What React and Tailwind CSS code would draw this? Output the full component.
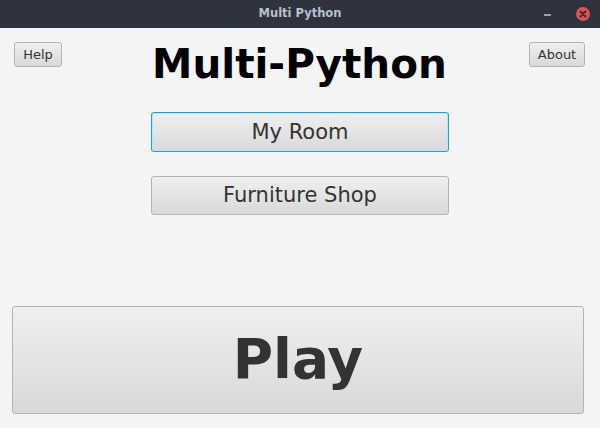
import React from "react";

const btn =
  "border border-[#b3b3b3] rounded-[3px] bg-gradient-to-b from-[#efefef] to-[#d9d9d9] text-[#333333] flex items-center justify-center";

const TitleBar = () => (
  <div className="relative h-[28px] bg-[#2f333d] flex items-center justify-center">
    <span className="text-[11.5px] font-bold text-[#b9c1cc]">
      Multi Python
    </span>
    <div className="absolute right-[10px] top-0 h-[28px] flex items-center gap-[25px]">
      <div className="w-[7px] h-[2px] bg-[#9aa2ad] mt-[1px]" />
      <div className="w-[14px] h-[14px] rounded-full bg-[#e05252] flex items-center justify-center">
        <svg width="8" height="8" viewBox="0 0 8 8">
          <path d="M1.5 1.5 L6.5 6.5 M6.5 1.5 L1.5 6.5" stroke="#3a2a2e" strokeWidth="1.8" strokeLinecap="round" />
        </svg>
      </div>
    </div>
  </div>
);

export default function App() {
  return (
    <div
      className="w-[600px] h-[428px] overflow-hidden"
      style={{ fontFamily: '"DejaVu Sans", sans-serif' }}
    >
      <TitleBar />
      <div className="h-[400px] bg-[#f4f4f4] flex flex-col">
        <div className="grid grid-cols-[1fr_auto_1fr] items-start pt-[14px] pl-[14px] pr-[15px]">
          <button className={`${btn} w-[48px] h-[25px] text-[13px] justify-self-start`}>
            Help
          </button>
          <h1 className="text-[40.5px] leading-[40px] font-bold text-black mt-[2px]">
            Multi-Python
          </h1>
          <button className={`${btn} w-[56px] h-[25px] text-[13px] justify-self-end`}>
            About
          </button>
        </div>
        <div className="flex flex-col items-start pl-[151px] mt-[28px] gap-[24px]">
          <button className="w-[298px] h-[40px] rounded-[3px] border border-[#1aa0dc] shadow-[inset_0_0_0_1px_#bfe3f3] bg-gradient-to-b from-[#efefef] to-[#d9d9d9] text-[#333333] text-[21px] flex items-center justify-center pt-[1px]">
            My Room
          </button>
          <button className={`${btn} w-[298px] h-[39px] text-[21px] pt-[1px]`}>
            Furniture Shop
          </button>
        </div>
        <div className="mt-auto mb-[14px] ml-[12px]">
          <button className={`${btn} w-[572px] h-[108px] text-[55px] font-bold pb-[2px]`}>
            Play
          </button>
        </div>
      </div>
    </div>
  );
}
